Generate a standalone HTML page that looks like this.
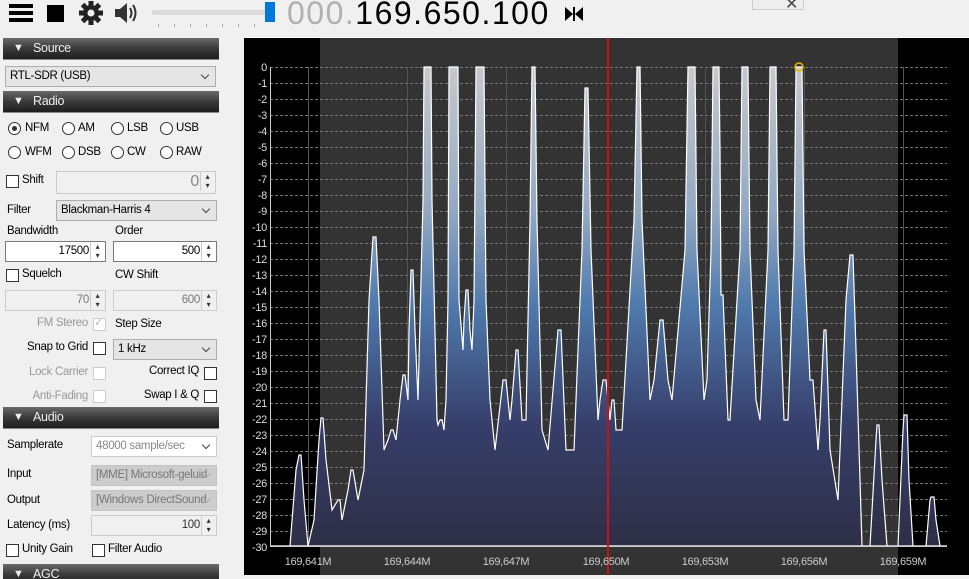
<!DOCTYPE html>
<html><head><meta charset="utf-8"><style>
*{box-sizing:border-box;margin:0;padding:0}
html,body{width:969px;height:579px;overflow:hidden}
body{background:#f0f0f0;font-family:"Liberation Sans",sans-serif;font-size:11.5px;letter-spacing:-0.3px;color:#000;position:relative}
.a{position:absolute;white-space:nowrap}
.hdr{position:absolute;left:3px;width:216px;height:22px;background:linear-gradient(#6a6a6a,#3a3a3a 50%,#1e1e1e);color:#eee;font-size:12.5px;border-bottom:1px solid #888}
.hdr span{position:absolute;left:10px;top:4px;font-size:11px}
.hdr b{position:absolute;left:30px;top:3px;font-weight:normal}
.dd{position:absolute;height:21px;background:#e5e5e5;border:1px solid #adadad;padding:3px 4px;overflow:hidden;white-space:nowrap}
.dd:after{content:"";position:absolute;right:7px;top:5px;width:5px;height:5px;border-right:1px solid #444;border-bottom:1px solid #444;transform:rotate(45deg)}
.dis{background:#ccc;color:#777;border-color:#c3c3c3}
.dis:after{border-color:#aaa}
.inp{position:absolute;height:21px;background:#fff;border:1px solid #7a7a7a;text-align:right;padding:3px 16px 0 0}
.inp:after{content:"▴\A▾";white-space:pre;position:absolute;right:1px;top:0;width:13px;height:19px;font-size:8px;line-height:9px;text-align:center;border-left:1px solid #ccc;color:#333}
.inpd{background:#f0f0f0;border-color:#ccc;color:#777}
.cb{position:absolute;width:13px;height:13px;border:1px solid #333;background:#fff}
.cbd{border-color:#ccc}
.rb{position:absolute;width:13px;height:13px;border:1px solid #333;border-radius:50%;background:#fff}
.g{color:#999}
</style></head><body>
<svg class="a" style="left:0;top:0" width="290" height="30">
<rect x="9" y="4" width="24" height="4" fill="#000"/><rect x="9" y="11" width="24" height="4" fill="#000"/><rect x="9" y="18" width="24" height="4" fill="#000"/>
<rect x="47" y="5" width="17" height="17" fill="#000"/>
<g transform="translate(91,13)"><circle r="8" fill="#222"/><g fill="#222"><rect x="-2.5" y="-12" width="5" height="24"/><rect x="-2.5" y="-12" width="5" height="24" transform="rotate(45)"/><rect x="-2.5" y="-12" width="5" height="24" transform="rotate(90)"/><rect x="-2.5" y="-12" width="5" height="24" transform="rotate(135)"/></g><circle r="3.5" fill="#f0f0f0"/></g>
<path d="M115 9h5l7-6v20l-7-6h-5z" fill="#333"/><path d="M130 8q3 5 0 10M133 5q5 8 0 16" stroke="#333" stroke-width="2" fill="none"/>
<rect x="153" y="11" width="115" height="3" fill="#e0e0e0" stroke="#ccc"/>
<rect x="265" y="2" width="10" height="20" fill="#0078d7"/>
<g fill="#aaa"><rect x="158" y="24" width="1" height="3"/><rect x="174" y="24" width="1" height="3"/><rect x="190" y="24" width="1" height="3"/><rect x="206" y="24" width="1" height="3"/><rect x="222" y="24" width="1" height="3"/><rect x="238" y="24" width="1" height="3"/><rect x="254" y="24" width="1" height="3"/></g>
</svg>
<div class="a" style="left:287px;top:-5px;font-size:32px;letter-spacing:1.5px"><span style="color:#b0b0b0">000.</span>169.650.100</div>
<svg class="a" style="left:564px;top:5px" width="22" height="18"><path d="M1 2l8 7-8 7zM19 2l-8 7 8 7z" fill="#000"/><rect x="9" y="2" width="2" height="14" fill="#000"/></svg>
<div class="a" style="left:752px;top:-2px;width:52px;height:12px;border:1px solid #ccc;background:#eee"></div>
<div class="a" style="left:785px;top:-6px;font-size:16px;color:#444">✕</div>

<div class="hdr" style="top:38px"><span>▼</span><b>Source</b></div>
<div class="dd" style="left:5px;top:66px;width:211px">RTL-SDR (USB)</div>
<div class="hdr" style="top:91px"><span>▼</span><b>Radio</b></div>
<div class="rb" style="left:8px;top:122px"></div><div class="a" style="left:12px;top:126px;width:5px;height:5px;border-radius:50%;background:#333"></div>
<div class="a" style="left:25px;top:122px">NFM</div>
<div class="rb" style="left:62px;top:122px"></div><div class="a" style="left:78px;top:122px">AM</div>
<div class="rb" style="left:111px;top:122px"></div><div class="a" style="left:127px;top:122px">LSB</div>
<div class="rb" style="left:160px;top:122px"></div><div class="a" style="left:176px;top:122px">USB</div>
<div class="rb" style="left:8px;top:146px"></div><div class="a" style="left:25px;top:146px">WFM</div>
<div class="rb" style="left:62px;top:146px"></div><div class="a" style="left:78px;top:146px">DSB</div>
<div class="rb" style="left:111px;top:146px"></div><div class="a" style="left:127px;top:146px">CW</div>
<div class="rb" style="left:160px;top:146px"></div><div class="a" style="left:176px;top:146px">RAW</div>
<div class="cb" style="left:6px;top:175px"></div><div class="a" style="left:22px;top:174px">Shift</div>
<div class="inp inpd" style="left:56px;top:171px;width:160px;height:23px;font-size:16px;color:#888;padding-top:1px">0</div>
<div class="a" style="left:7px;top:204px">Filter</div>
<div class="dd" style="left:56px;top:200px;width:161px">Blackman-Harris 4</div>
<div class="a" style="left:7px;top:225px">Bandwidth</div><div class="a" style="left:115px;top:225px">Order</div>
<div class="inp" style="left:5px;top:241px;width:101px">17500</div>
<div class="inp" style="left:113px;top:241px;width:104px">500</div>
<div class="cb" style="left:6px;top:269px"></div><div class="a" style="left:22px;top:268px">Squelch</div><div class="a" style="left:115px;top:269px">CW Shift</div>
<div class="inp inpd" style="left:5px;top:290px;width:101px">70</div>
<div class="inp inpd" style="left:113px;top:290px;width:104px">600</div>
<div class="a g" style="left:88px;top:317px;transform:translateX(-100%)">FM Stereo</div><div class="cb cbd" style="left:93px;top:318px"></div><div class="a" style="left:94px;top:315px;color:#bbb">✓</div>
<div class="a" style="left:115px;top:318px">Step Size</div>
<div class="a" style="left:88px;top:341px;transform:translateX(-100%)">Snap to Grid</div><div class="cb" style="left:93px;top:342px"></div>
<div class="dd" style="left:113px;top:339px;width:104px">1 kHz</div>
<div class="a g" style="left:88px;top:366px;transform:translateX(-100%)">Lock Carrier</div><div class="cb cbd" style="left:93px;top:367px"></div>
<div class="a" style="left:199px;top:365px;transform:translateX(-100%)">Correct IQ</div><div class="cb" style="left:204px;top:367px"></div>
<div class="a g" style="left:88px;top:390px;transform:translateX(-100%)">Anti-Fading</div><div class="cb cbd" style="left:93px;top:390px"></div>
<div class="a" style="left:199px;top:389px;transform:translateX(-100%)">Swap I &amp; Q</div><div class="cb" style="left:204px;top:390px"></div>
<div class="hdr" style="top:407px"><span>▼</span><b>Audio</b></div>
<div class="a" style="left:7px;top:439px">Samplerate</div>
<div class="dd" style="left:91px;top:436px;width:126px;background:#fff;color:#888;border-color:#ccc;padding-right:18px">48000 sample/sec</div>
<div class="a" style="left:7px;top:468px">Input</div>
<div class="dd dis" style="left:91px;top:465px;width:126px;padding-right:18px">[MME] Microsoft-geluid</div>
<div class="a" style="left:7px;top:494px">Output</div>
<div class="dd dis" style="left:91px;top:490px;width:126px;padding-right:18px">[Windows DirectSound</div>
<div class="a" style="left:7px;top:519px">Latency (ms)</div>
<div class="inp inpd" style="left:91px;top:515px;width:126px;color:#333">100</div>
<div class="cb" style="left:6px;top:544px"></div><div class="a" style="left:22px;top:543px">Unity Gain</div>
<div class="cb" style="left:92px;top:544px"></div><div class="a" style="left:108px;top:543px">Filter Audio</div>
<div class="hdr" style="top:564px"><span>▼</span><b>AGC</b></div>

<svg class="a" style="left:0;top:0" width="969" height="579">
<defs><linearGradient id="gr" gradientUnits="userSpaceOnUse" x1="0" y1="67" x2="0" y2="546">
<stop offset="0" stop-color="#c6c8cc"/><stop offset="0.3" stop-color="#93a9c2"/><stop offset="0.5" stop-color="#4f79ac"/><stop offset="0.75" stop-color="#363e6a"/><stop offset="1" stop-color="#2e2f46"/></linearGradient></defs>
<rect x="244" y="38" width="725" height="537" fill="#000"/>
<rect x="320" y="38" width="578" height="537" fill="#333"/>
<rect x="244" y="37" width="725" height="1" fill="#fff"/>
<g stroke="#777" stroke-dasharray="3,2" stroke-width="1">
<path d="M270 67.5H947M270 83.5H947M270 99.5H947M270 115.5H947M270 131.5H947M270 147.5H947M270 163.5H947M270 179.5H947M270 195.5H947M270 211.5H947M270 227.5H947M270 243.5H947M270 259.5H947M270 275.5H947M270 291.5H947M270 307.5H947M270 323.5H947M270 339.5H947M270 355.5H947M270 371.5H947M270 387.5H947M270 403.5H947M270 419.5H947M270 435.5H947M270 451.5H947M270 467.5H947M270 483.5H947M270 499.5H947M270 515.5H947M270 531.5H947"/></g>
<g stroke="#555"><path d="M308.5 67V546M407.5 67V546M506.5 67V546M705.5 67V546M804.5 67V546M903.5 67V546"/></g>
<path fill="url(#gr)" stroke="#fff" stroke-width="1.2" d="M270 546 290,546 296,470 299,455 301,455 304,500 308,546 314,520 319,440 321,418 323,418 326,460 332,510 338,500 340,500 342,520 348,490 351,470 353,470 358,500 364,470 369,300 373,237 376,237 379,300 384,450 388,440 391,430 393,430 396,440 400,400 403,375 405,375 408,400 409,330 411,270 413,270 415,330 418,400 423,200 424,67 431,67 432,200 437,420 438,425 440,420 442,420 444,430 446,400 448,300 449,67 458,67 459,300 463,350 464,320 466,290 468,290 470,330 472,350 474,300 476,67 484,67 486,300 490,400 495,450 503,380 506,380 510,420 512,400 516,350 518,350 522,420 526,420 530,220 532,67 535,67 537,220 542,430 548,450 558,330 561,330 566,450 574,450 582,250 585,88 588,88 591,250 598,420 600,400 603,380 606,380 609,410 610,420 612,400 614,400 616,430 622,430 634,220 637,67 640,67 642,220 650,400 654,380 660,320 663,320 668,380 672,400 685,250 688,67 695,67 697,250 704,400 707,380 711,250 713,67 719,67 720,150 721,295 723,295 728,420 730,420 740,250 742,67 748,67 750,250 756,400 760,420 768,250 770,67 776,67 778,250 784,420 788,420 794,250 796,67 802,67 804,250 810,380 811,380 813,380 818,450 820,420 824,330 826,330 830,450 838,500 846,300 850,255 853,255 856,350 862,546 870,546 876,440 877,425 879,425 882,480 887,546 898,546 903,430 904,415 907,415 909,480 913,546 926,546 930,500 931,497 934,497 936,520 940,546 947,546Z"/>
<path d="M270 546.5H947M270.5 67V546" stroke="#ccc"/>
<rect x="607" y="38" width="2" height="537" fill="#d01010"/>
<circle cx="799" cy="67" r="4" fill="none" stroke="#e8b800" stroke-width="1.5"/>
<g fill="#ddd" font-family="Liberation Sans" font-size="11" text-anchor="end">
<text x="267" y="71">0</text><text x="267" y="87">-1</text><text x="267" y="103">-2</text><text x="267" y="119">-3</text><text x="267" y="135">-4</text><text x="267" y="151">-5</text><text x="267" y="167">-6</text><text x="267" y="183">-7</text><text x="267" y="199">-8</text><text x="267" y="215">-9</text><text x="267" y="231">-10</text><text x="267" y="247">-11</text><text x="267" y="263">-12</text><text x="267" y="279">-13</text><text x="267" y="295">-14</text><text x="267" y="311">-15</text><text x="267" y="327">-16</text><text x="267" y="343">-17</text><text x="267" y="359">-18</text><text x="267" y="375">-19</text><text x="267" y="391">-20</text><text x="267" y="407">-21</text><text x="267" y="423">-22</text><text x="267" y="439">-23</text><text x="267" y="455">-24</text><text x="267" y="471">-25</text><text x="267" y="487">-26</text><text x="267" y="503">-27</text><text x="267" y="519">-28</text><text x="267" y="535">-29</text><text x="267" y="551">-30</text>
</g>
<g fill="#ccc" font-family="Liberation Sans" font-size="11" text-anchor="middle">
<text x="308" y="565">169,641M</text><text x="407" y="565">169,644M</text><text x="506" y="565">169,647M</text><text x="606" y="565">169,650M</text><text x="705" y="565">169,653M</text><text x="804" y="565">169,656M</text><text x="903" y="565">169,659M</text>
</g>
<rect x="244" y="575" width="725" height="4" fill="#f0f0f0"/>
</svg>
</body></html>
